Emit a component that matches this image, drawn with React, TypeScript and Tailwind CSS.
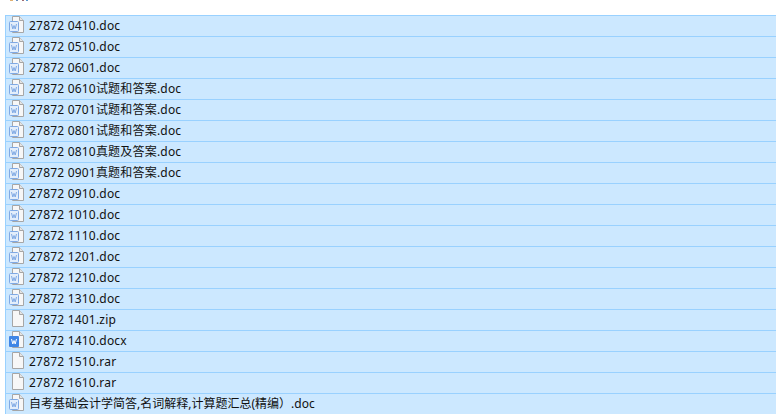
const FILES = [
  { name: "27872 0410.doc", type: "doc" },
  { name: "27872 0510.doc", type: "doc" },
  { name: "27872 0601.doc", type: "doc" },
  { name: "27872 0610试题和答案.doc", type: "doc" },
  { name: "27872 0701试题和答案.doc", type: "doc" },
  { name: "27872 0801试题和答案.doc", type: "doc" },
  { name: "27872 0810真题及答案.doc", type: "doc" },
  { name: "27872 0901真题和答案.doc", type: "doc" },
  { name: "27872 0910.doc", type: "doc" },
  { name: "27872 1010.doc", type: "doc" },
  { name: "27872 1110.doc", type: "doc" },
  { name: "27872 1201.doc", type: "doc" },
  { name: "27872 1210.doc", type: "doc" },
  { name: "27872 1310.doc", type: "doc" },
  { name: "27872 1401.zip", type: "blank" },
  { name: "27872 1410.docx", type: "docx" },
  { name: "27872 1510.rar", type: "blank" },
  { name: "27872 1610.rar", type: "blank" },
  { name: "自考基础会计学简答,名词解释,计算题汇总(精编）.doc", type: "doc" },
];

function FileIcon({ type }: { type: string }) {
  return (
    <svg width="16" height="18" viewBox="0 0 16 18" className="mb-[2px] shrink-0">
      <path d="M3.5 .5H10.5L14.5 4.5V16.5H3.5Z" fill="#f7f7f7" stroke="#a6a6a6" />
      <path d="M10.5 .5V4.5H14.5" fill="#e4e4e4" stroke="#a6a6a6" />
      {type === "doc" && (
        <>
          <rect x=".5" y="5.5" width="9" height="10" rx="1" fill="#e3eefb" stroke="#7fa9e4" />
          <path d="M2.5 8L3.8 13L5 9.5L6.2 13L7.5 8" fill="none" stroke="#7fa9e4" />
        </>
      )}
      {type === "docx" && (
        <>
          <rect x="0" y="5" width="10" height="11" rx="1" fill="#3f86e6" />
          <path d="M2.5 8L3.8 13L5 9.5L6.2 13L7.5 8" fill="none" stroke="#ffffff" />
        </>
      )}
    </svg>
  );
}

export default function App() {
  return (
    <div className="h-[420px] w-[776px] overflow-hidden bg-white font-['Noto_Sans','Noto_Sans_CJK_SC',sans-serif] text-[12px] tracking-[0.2px] text-[#111]">
      {/* leftovers of the cropped line above the list */}
      <div className="h-[15px]">
        <svg width="40" height="3" viewBox="0 0 40 3">
          <rect x="10" y="0" width="3" height="1" fill="#e0b070" />
          <rect x="16" y="0" width="2" height="1" fill="#6a90c0" />
          <rect x="22" y="0" width="2" height="1" fill="#a06a70" />
          <rect x="26" y="0" width="2" height="1" fill="#5a9ad0" />
        </svg>
      </div>
      <div className="ml-[5px] border-t border-l border-[#99d1ff]">
        {FILES.map((file, i) => (
          <div
            key={file.name}
            className={
              i === FILES.length - 1
                ? "flex h-[20px] items-center gap-[4px] bg-[#cce8ff] pl-[3px] tracking-normal"
                : "flex h-[21px] items-center gap-[4px] border-b border-[#99d1ff] bg-[#cce8ff] pl-[3px]"
            }
          >
            <FileIcon type={file.type} />
            <span className="whitespace-pre">{file.name}</span>
          </div>
        ))}
      </div>
    </div>
  );
}
